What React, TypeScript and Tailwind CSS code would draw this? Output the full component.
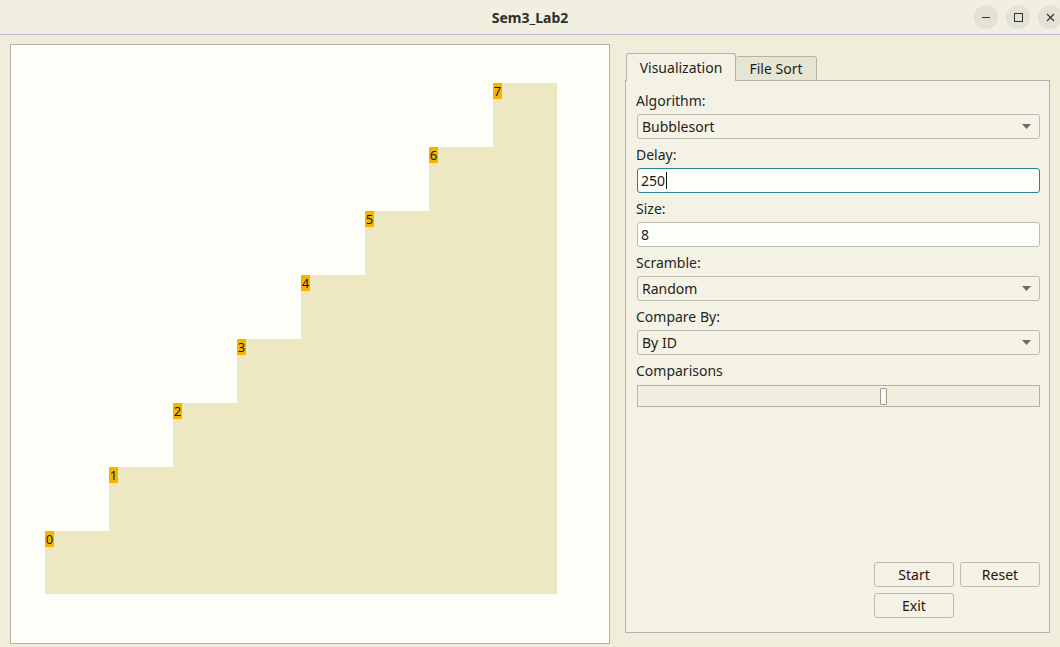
import React from 'react'

const bars = [0, 1, 2, 3, 4, 5, 6, 7]

const ComboBox: React.FC<{ value: string }> = ({ value }) => (
  <div className="flex h-[25px] items-center justify-between rounded-[3px] border border-[#bdbcb0] bg-[#f4f3e6] pl-[4px] pr-[8px] text-[14px] text-[#2a1a10]">
    <span>{value}</span>
    <svg width="9" height="5" viewBox="0 0 9 5">
      <path d="M0 0 L9 0 L4.5 5 Z" fill="#6b6b6b" />
    </svg>
  </div>
)

const LineEdit: React.FC<{ value: string; focused?: boolean }> = ({ value, focused }) => (
  <div
    className={
      focused
        ? 'flex h-[25px] items-center rounded-[3px] border border-[#2a8295] bg-[#fefef8] pl-[3px] text-[14px] text-[#1a1a1a]'
        : 'flex h-[25px] items-center rounded-[3px] border border-[#bdbcb0] bg-[#fefef8] pl-[3px] text-[14px] text-[#1a1a1a]'
    }
  >
    <span>{value}</span>
    {focused && <span className="ml-[1px] h-[17px] w-px bg-[#111]" />}
  </div>
)

const Label: React.FC<{ text: string }> = ({ text }) => (
  <div className="flex h-[20px] items-center text-[14px] text-[#262626]">{text}</div>
)

const PushButton: React.FC<{ text: string }> = ({ text }) => (
  <button className="flex h-[25px] w-[80px] items-center justify-center rounded-[3px] border border-[#bdbcb0] bg-[#f3f2e4] text-[14px] text-[#1f1410]">
    {text}
  </button>
)

const App: React.FC = () => {
  return (
    <div
      className="h-[647px] w-[1060px] overflow-hidden bg-[#f0eedb]"
      style={{ fontFamily: '"Noto Sans", "DejaVu Sans", sans-serif' }}
    >
      {/* Title bar */}
      <div className="relative flex h-[35px] items-center justify-center border-b border-[#bcbcdc] bg-[#f1efe0]">
        <span className="text-[14px] font-bold text-[#2e2e2e]">Sem3_Lab2</span>
        <div className="absolute right-[-2px] top-[5px] flex gap-[8px]">
          <div className="flex h-[24px] w-[24px] items-center justify-center rounded-full bg-[#e3e2d6]">
            <div className="h-[1px] w-[8px] bg-[#333]" />
          </div>
          <div className="flex h-[24px] w-[24px] items-center justify-center rounded-full bg-[#e3e2d6]">
            <div className="h-[9px] w-[9px] border border-[#333]" />
          </div>
          <div className="flex h-[24px] w-[24px] items-center justify-center rounded-full bg-[#e3e2d6]">
            <svg width="9" height="9" viewBox="0 0 9 9">
              <path d="M1 1 L8 8 M8 1 L1 8" stroke="#333" strokeWidth="1.2" />
            </svg>
          </div>
        </div>
      </div>

      <div className="flex gap-[15px] pl-[10px] pt-[9px]">
        {/* Sort canvas */}
        <div className="flex h-[600px] w-[600px] items-end border border-[#b4b3aa] bg-[#fefef8] pb-[49px] pl-[34px]">
          {bars.map((i) => (
            <div key={i} className="relative w-[64px] bg-[#ece9c2]" style={{ height: 64 * (i + 1) - 1 }}>
              <div className="absolute left-0 top-0 flex h-[16px] w-[9px] items-center justify-center bg-[#f4b400] text-[13px] leading-none text-[#1a1a1a]">
                {i}
              </div>
            </div>
          ))}
        </div>

        {/* Tab widget */}
        <div className="mt-[9px] flex w-[425px] flex-col">
          <div className="flex items-end pl-[1px]">
            <div className="relative z-10 -mb-px flex h-[28px] w-[110px] items-center justify-center rounded-t-[3px] border border-b-0 border-[#b4b3aa] bg-[#f3f2e4] text-[14px] text-[#1e1e1e]">
              Visualization
            </div>
            <div className="flex h-[24px] w-[81px] items-center justify-center rounded-t-[3px] border border-b-0 border-l-0 border-[#b4b3aa] bg-[#e6e5d4] text-[14px] text-[#1e1e1e]">
              File Sort
            </div>
          </div>
          <div className="flex h-[553px] flex-col border border-[#b4b3aa] bg-[#f3f2e4] pl-[10px] pr-[9px] pt-[9px] pb-[14px]">
            <Label text="Algorithm:" />
            <div className="mt-[4px] pl-px">
              <ComboBox value="Bubblesort" />
            </div>
            <div className="mt-[5px]">
              <Label text="Delay:" />
            </div>
            <div className="mt-[4px] pl-px">
              <LineEdit value="250" focused />
            </div>
            <div className="mt-[5px]">
              <Label text="Size:" />
            </div>
            <div className="mt-[4px] pl-px">
              <LineEdit value="8" />
            </div>
            <div className="mt-[5px]">
              <Label text="Scramble:" />
            </div>
            <div className="mt-[4px] pl-px">
              <ComboBox value="Random" />
            </div>
            <div className="mt-[5px]">
              <Label text="Compare By:" />
            </div>
            <div className="mt-[4px] pl-px">
              <ComboBox value="By ID" />
            </div>
            <div className="mt-[5px]">
              <Label text="Comparisons" />
            </div>
            <div className="mt-[5px] pl-px">
              <div className="relative h-[22px] border border-[#b4b3aa] bg-[#f1f0e0]">
                <div className="absolute left-[242px] top-[2px] h-[17px] w-[7px] rounded-[1px] border border-[#9a9a94] bg-[#fbfbf2]" />
              </div>
            </div>

            <div className="flex-1" />

            <div className="flex flex-col items-end gap-[6px]">
              <div className="flex gap-[6px]">
                <PushButton text="Start" />
                <PushButton text="Reset" />
              </div>
              <div className="mr-[86px]">
                <PushButton text="Exit" />
              </div>
            </div>
          </div>
        </div>
      </div>
    </div>
  )
}

export default App
